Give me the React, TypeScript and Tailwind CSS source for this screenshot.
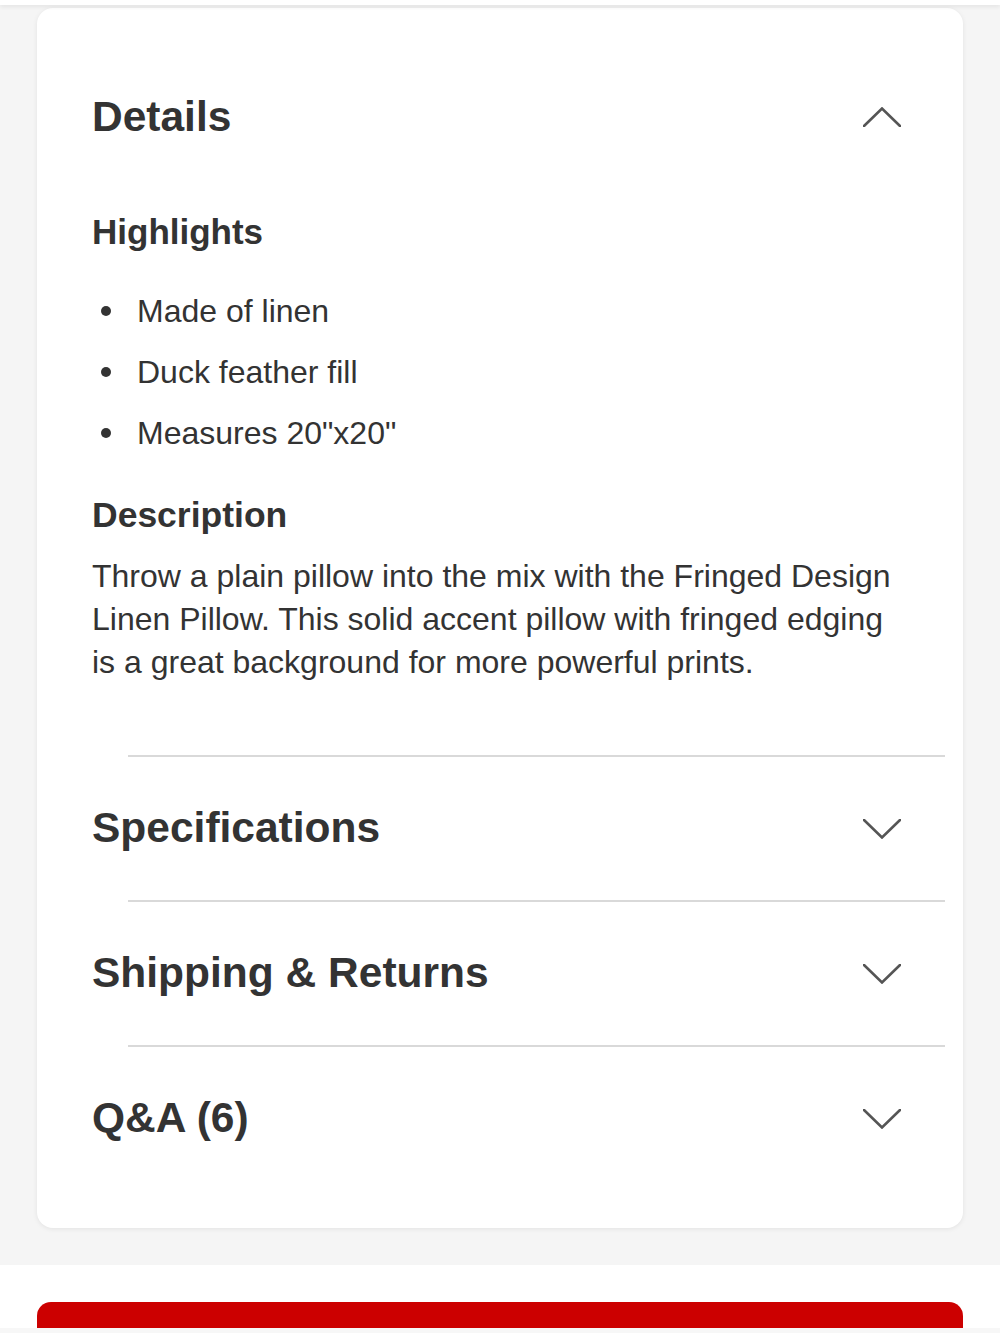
const FONT = { fontFamily: '"Liberation Sans", Arial, sans-serif' };

const HIGHLIGHTS = ['Made of linen', 'Duck feather fill', 'Measures 20"x20"'];

const SECTIONS = ['Specifications', 'Shipping & Returns', 'Q&A (6)'];

function Chevron({ up }: { up?: boolean }) {
  return (
    <svg width="38" height="20" viewBox="0 0 38 20" fill="none" className="shrink-0">
      <polyline
        points={up ? '1,19 19,1.5 37,19' : '1,1 19,18.5 37,1'}
        stroke="#555"
        strokeWidth="2.6"
        strokeLinecap="round"
        strokeLinejoin="miter"
      />
    </svg>
  );
}

export default function App() {
  return (
    <div className="h-[1333px] w-[1000px] overflow-hidden bg-[#f5f5f5] text-[#333]" style={FONT}>
      {/* top bar edge */}
      <div className="relative z-10 h-[5px] bg-white shadow-[0_2px_4px_rgba(0,0,0,0.07)]" />

      <div className="mx-[37px] mt-[3px] mb-[37px] rounded-[16px] bg-white pt-[79px] pb-[38px] shadow-[0_1px_5px_rgba(0,0,0,0.08)]">
        {/* Details (open) */}
        <div className="flex h-[60px] items-center justify-between pl-[55px] pr-[62px]">
          <h2 className="text-[42.5px] font-bold leading-none">Details</h2>
          <Chevron up />
        </div>

        <div className="px-[55px] pb-[71px]">
          <h3 className="mt-[65px] text-[35px] font-bold leading-[40px]">Highlights</h3>
          <ul className="mt-[28px]">
            {HIGHLIGHTS.map((h) => (
              <li key={h} className="flex h-[61px] items-center">
                <span className="ml-[9px] mr-[26px] h-[10px] w-[10px] rounded-full bg-[#333]" />
                <span className="text-[32px] leading-none">{h}</span>
              </li>
            ))}
          </ul>
          <h3 className="mt-[32px] text-[35.5px] font-bold leading-[40px]">Description</h3>
          <p className="mt-[20px] whitespace-nowrap text-[32px] leading-[43px]">
            Throw a plain pillow into the mix with the Fringed Design
            <br />
            Linen Pillow. This solid accent pillow with fringed edging
            <br />
            is a great background for more powerful prints.
          </p>
        </div>

        {SECTIONS.map((s) => (
          <div key={s}>
            <div className="ml-[91px] mr-[18px] h-[2px] bg-[#d9d9d9]" />
            <div className="flex h-[143px] items-center justify-between pl-[55px] pr-[62px]">
              <h2 className="text-[42.5px] font-bold leading-none">{s}</h2>
              <Chevron />
            </div>
          </div>
        ))}
      </div>

      {/* sticky add-to-cart area */}
      <div className="h-[63px] bg-white px-[37px] pt-[37px]">
        <div className="h-[26px] rounded-t-[14px] bg-[#cc0000]" />
      </div>
      <div className="h-[5px] bg-[#f7f7f7]" />
    </div>
  );
}
